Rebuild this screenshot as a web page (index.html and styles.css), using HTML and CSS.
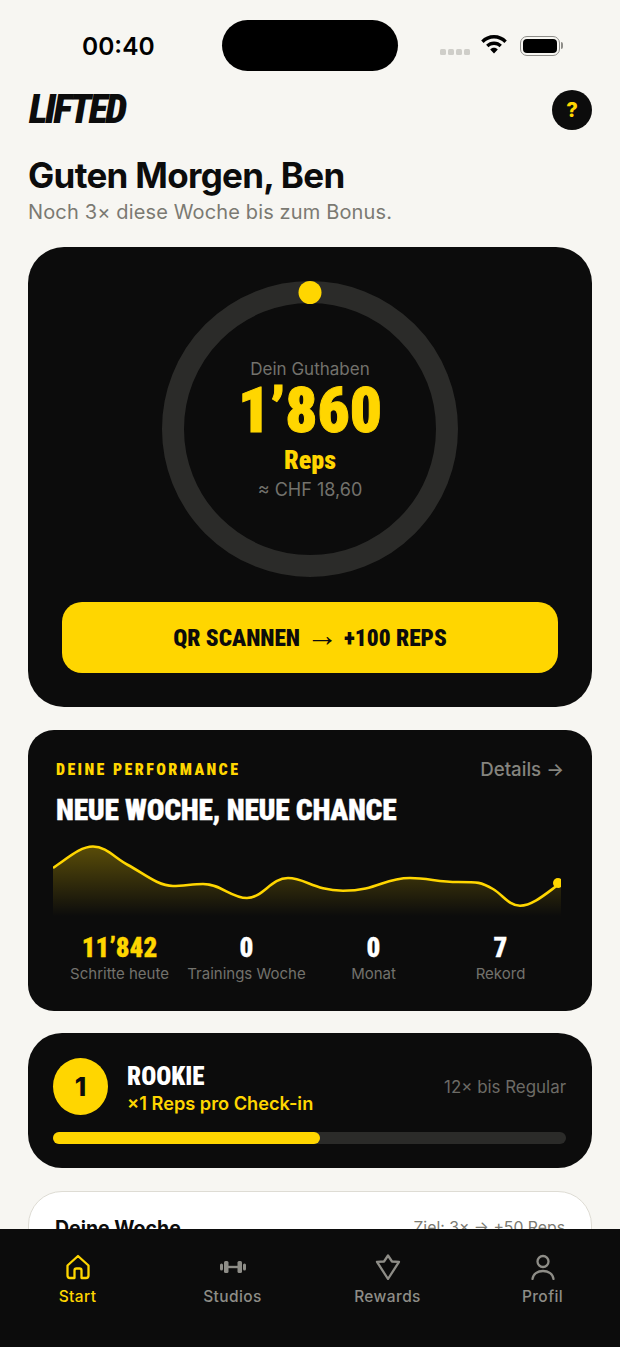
FILE: index.html
```html
<!DOCTYPE html>
<html lang="de">
<head>
<meta charset="utf-8">
<title>LIFTED</title>
<link rel="stylesheet" href="styles.css">
</head>
<body>
<div class="phone">
  <main class="content">
    <div class="status">
      <span class="time">00:40</span>
      <span class="island"></span>
      <div class="status-icons">
        <span class="signal"><i></i><i></i><i></i><i></i></span>
        <svg class="wifi" width="28" height="20" viewBox="0 0 28 20"><path d="M14 1C9 1 4.600 3 1.200 6.400L3.600 9C6.400 6.300 10 4.600 14 4.600S21.600 6.300 24.400 9L26.800 6.400C23.400 3 19 1 14 1ZM14 7.500C11 7.500 8.200 8.700 6.100 10.800L8.500 13.300C10 11.900 11.900 11 14 11S18 11.900 19.500 13.300L21.900 10.800C19.800 8.700 17 7.500 14 7.500ZM14 13.800C12.500 13.800 11.200 14.400 10.200 15.400L14 19.400L17.800 15.400C16.800 14.400 15.500 13.800 14 13.800Z" fill="#000"/></svg>
        <span class="battery"><span class="battery-fill"></span></span>
        <span class="battery-cap"></span>
      </div>
    </div>
    <header class="top">
      <span class="logo">LIFTED</span>
      <span class="help">?</span>
    </header>
    <h1 class="title">Guten Morgen, Ben</h1>
    <p class="sub">Noch 3× diese Woche bis zum Bonus.</p>

    <section class="hero">
      <div class="ring">
        <svg class="ring-svg" width="296" height="296" viewBox="0 0 296 296">
          <circle cx="148" cy="148" r="137" fill="none" stroke="#2b2b29" stroke-width="22"/>
          <circle cx="148" cy="11.500" r="11.500" fill="#ffd600"/>
        </svg>
        <div class="ring-text">
          <span class="ring-label">Dein Guthaben</span>
          <span class="ring-value">1’860</span>
          <span class="ring-unit">Reps</span>
          <span class="ring-chf">≈ CHF 18,60</span>
        </div>
      </div>
      <button class="scan"><span>QR SCANNEN</span><span class="scan-arrow">→</span><span>+100 REPS</span></button>
    </section>

    <section class="perf">
      <div class="perf-head">
        <span class="perf-label">DEINE PERFORMANCE</span>
        <span class="perf-link">Details →</span>
      </div>
      <h2 class="perf-title">NEUE WOCHE, NEUE CHANCE</h2>
      <svg class="chart" width="508" height="76" viewBox="0 0 508 76">
        <defs>
          <linearGradient id="fade" x1="0" y1="0" x2="0" y2="1">
            <stop offset="0" stop-color="#ffd600" stop-opacity=".32"/>
            <stop offset="1" stop-color="#ffd600" stop-opacity="0"/>
          </linearGradient>
        </defs>
        <path d="M0 28C15 18 27 6.500 40 6.500C53 6.500 62 18 75 25C90 33 105 46 120 46C130 46 140 44 150 44C168 44 178 58 194 58C210 58 218 38 235 38C252 38 262 50.700 290 50.700C325 50.700 330 38 357 38C375 38 385 42 405 42C425 42 428 42 440 49C450 55 456 65.700 467 65.700C480 65.700 495 52 505 45L508 43V76H0Z" fill="url(#fade)"/>
        <path d="M0 28C15 18 27 6.500 40 6.500C53 6.500 62 18 75 25C90 33 105 46 120 46C130 46 140 44 150 44C168 44 178 58 194 58C210 58 218 38 235 38C252 38 262 50.700 290 50.700C325 50.700 330 38 357 38C375 38 385 42 405 42C425 42 428 42 440 49C450 55 456 65.700 467 65.700C480 65.700 495 52 505 45" fill="none" stroke="#ffd600" stroke-width="2.600"/>
        <circle cx="505" cy="43" r="5" fill="#ffd600"/>
      </svg>
      <div class="stats">
        <div class="stat"><b class="stat-num stat-yellow">11’842</b><span class="stat-label">Schritte heute</span></div>
        <div class="stat"><b class="stat-num">0</b><span class="stat-label">Trainings Woche</span></div>
        <div class="stat"><b class="stat-num">0</b><span class="stat-label">Monat</span></div>
        <div class="stat"><b class="stat-num">7</b><span class="stat-label">Rekord</span></div>
      </div>
    </section>

    <section class="level">
      <div class="level-row">
        <span class="badge">1</span>
        <div class="level-text">
          <span class="level-name">ROOKIE</span>
          <span class="level-multi">×1 Reps pro Check-in</span>
        </div>
        <span class="level-next">12× bis Regular</span>
      </div>
      <div class="bar"><span class="bar-fill"></span></div>
    </section>

    <section class="week">
      <span class="week-title">Deine Woche</span>
      <span class="week-goal">Ziel: 3× → +50 Reps</span>
    </section>
  </main>

  <nav class="nav">
    <a class="nav-item nav-active">
      <svg width="26" height="26" viewBox="0 0 26 26" fill="none" stroke="currentColor" stroke-width="2.300" stroke-linejoin="round"><path d="M13 2L2.500 11.500V21.500Q2.500 24 5 24H9.500V16.500Q9.500 14.500 11.500 14.500H14.500Q16.500 14.500 16.500 16.500V24H21Q23.500 24 23.500 21.500V11.500Z"/></svg>
      <span>Start</span>
    </a>
    <a class="nav-item">
      <svg width="26" height="26" viewBox="0 0 26 26" fill="currentColor"><rect x="0" y="9.500" width="3" height="7" rx="1.500"/><rect x="4" y="7" width="4.500" height="12" rx="1.500"/><rect x="8" y="11.800" width="10" height="2.400"/><rect x="17.500" y="7" width="4.500" height="12" rx="1.500"/><rect x="23" y="9.500" width="3" height="7" rx="1.500"/></svg>
      <span>Studios</span>
    </a>
    <a class="nav-item">
      <svg width="26" height="26" viewBox="0 0 26 26" fill="none" stroke="currentColor" stroke-width="2.300" stroke-linejoin="round"><path d="M13 1.500L17 7.500L24 7.800L13 25L2 7.800L9 7.500Z"/></svg>
      <span>Rewards</span>
    </a>
    <a class="nav-item">
      <svg width="26" height="26" viewBox="0 0 26 26" fill="none" stroke="currentColor" stroke-width="2.300" stroke-linecap="round"><circle cx="13" cy="7.500" r="5.500"/><path d="M2.500 25C3 20 7.500 17 13 17S23 20 23.500 25"/></svg>
      <span>Profil</span>
    </a>
  </nav>
</div>
</body>
</html>
```

FILE: styles.css
```css
* { box-sizing: border-box; margin: 0; padding: 0; }
html, body { height: 100%; }
body {
  background: #f7f6f2;
  font-family: "Inter", "Liberation Sans", sans-serif;
  color: #0c0c0c;
}
.phone {
  width: 620px;
  height: 1347px;
  display: flex;
  flex-direction: column;
  overflow: hidden;
}
.content {
  flex: 1;
  min-height: 0;
  overflow: hidden;
  padding: 20px 28px 0;
  display: flex;
  flex-direction: column;
}
.content > * { flex: none; }

/* status bar */
.status {
  height: 51px;
  display: flex;
  align-items: center;
}
.time {
  width: 194px;
  padding-left: 54px;
  padding-top: 1px;
  font-size: 24.500px;
  font-weight: 600;
  line-height: 51px;
  color: #000;
}
.island {
  width: 176px;
  height: 51px;
  border-radius: 26px;
  background: #000;
}
.status-icons {
  display: flex;
  align-items: center;
  margin-left: 42px;
}
.signal {
  display: flex;
  gap: 2px;
  margin-top: 13px;
  margin-right: 10px;
}
.signal i {
  width: 6px;
  height: 6px;
  border-radius: 1.500px;
  background: #cfcec9;
}
.wifi { margin-top: -3px; margin-right: 12px; }
.battery {
  width: 40px;
  height: 20px;
  border: 1.500px solid #8e8d89;
  border-radius: 7px;
  padding: 2px;
  display: flex;
}
.battery-fill {
  flex: 1;
  background: #000;
  border-radius: 4px;
}
.battery-cap {
  width: 2px;
  height: 7px;
  margin-left: 1px;
  border-radius: 0 2px 2px 0;
  background: #8e8d89;
}

/* header */
.top {
  margin-top: 19px;
  height: 40px;
  display: flex;
  align-items: center;
  justify-content: space-between;
}
.logo {
  font-family: "Roboto", sans-serif;
  font-stretch: 75%;
  font-weight: 900;
  font-style: italic;
  font-size: 40px;
  line-height: 40px;
  letter-spacing: -2.500px;
  margin-left: 1px;
}
.help {
  width: 40px;
  height: 40px;
  border-radius: 50%;
  background: #0c0c0c;
  color: #ffd600;
  font-size: 20px;
  font-weight: 800;
  display: flex;
  align-items: center;
  justify-content: center;
}
.title {
  margin: 23px 0 0;
  font-size: 35px;
  line-height: 44px;
  font-weight: 700;
  letter-spacing: -0.700px;
}
.sub {
  margin: 2px 0 0;
  font-size: 20px;
  line-height: 26px;
  letter-spacing: .14px;
  color: #7b7a72;
}

/* shared condensed face */
.ring-value, .ring-unit, .scan, .perf-label, .perf-title, .stat-num, .level-name {
  font-family: "Roboto", sans-serif;
  font-stretch: 75%;
  font-weight: 900;
}

/* hero */
.hero {
  margin-top: 22px;
  height: 460px;
  border-radius: 36px;
  background: #0c0c0c;
  padding: 34px 34px 0;
  display: flex;
  flex-direction: column;
  align-items: center;
}
.ring {
  width: 296px;
  height: 296px;
  display: grid;
}
.ring-svg, .ring-text { grid-area: 1 / 1; }
.ring-text {
  display: flex;
  flex-direction: column;
  align-items: center;
  padding-top: 77px;
}
.ring-label {
  font-size: 17px;
  line-height: 22px;
  color: #73726c;
}
.ring-value {
  font-size: 63px;
  line-height: 60px;
  margin-top: 1px;
  color: #ffd600;
  -webkit-text-stroke: 1px #ffd600;
}
.ring-unit {
  font-size: 26px;
  line-height: 30px;
  margin-top: 4px;
  color: #ffd600;
}
.ring-chf {
  font-size: 18px;
  line-height: 24px;
  margin-top: 3px;
  color: #73726c;
}
.scan {
  width: 100%;
  height: 71px;
  margin-top: 25px;
  border: 0;
  border-radius: 20px;
  background: #ffd600;
  color: #0c0c0c;
  font-size: 23.300px;
  display: flex;
  align-items: center;
  justify-content: center;
  gap: 6px;
}
.scan-arrow {
  font-family: "Liberation Sans", sans-serif;
  font-weight: 400;
  font-size: 32px;
  line-height: 32px;
  margin-top: -5px;
}

/* performance */
.perf {
  margin-top: 23px;
  height: 281px;
  border-radius: 26px;
  background: #0c0c0c;
  padding: 28px 28px 0;
}
.perf-head {
  display: flex;
  align-items: center;
  justify-content: space-between;
  height: 22px;
}
.perf-label {
  font-size: 16px;
  letter-spacing: 2.400px;
  color: #ffd600;
}
.perf-link {
  font-size: 18.700px;
  font-weight: 500;
  color: #85847e;
}
.perf-title {
  margin-top: 12px;
  font-size: 29.500px;
  line-height: 36px;
  letter-spacing: -.3px;
  color: #fff;
  -webkit-text-stroke: .3px #fff;
}
.chart {
  display: block;
  margin: 12px 0 0 -3px;
}
.stats {
  margin-top: 17px;
  display: grid;
  grid-template-columns: repeat(4, 127px);
}
.stat {
  display: flex;
  flex-direction: column;
  align-items: center;
}
.stat-num {
  font-size: 27px;
  line-height: 30px;
  color: #fff;
  -webkit-text-stroke: .3px currentColor;
}
.stat-yellow { color: #ffd600; }
.stat-label {
  margin-top: 1px;
  font-size: 15px;
  line-height: 20px;
  color: #73726c;
  white-space: nowrap;
}

/* level */
.level {
  margin-top: 22px;
  height: 135px;
  border-radius: 34px;
  background: #0c0c0c;
  padding: 25px 26px 0 25px;
}
.level-row {
  display: flex;
  align-items: center;
  height: 57px;
}
.badge {
  width: 55px;
  height: 57px;
  border-radius: 50%;
  background: #ffd600;
  color: #0c0c0c;
  font-size: 26px;
  font-weight: 800;
  display: flex;
  align-items: center;
  justify-content: center;
  flex: none;
}
.level-text {
  margin-left: 19px;
  padding-top: 3px;
  display: flex;
  flex-direction: column;
  flex: 1;
}
.level-name {
  font-size: 25px;
  line-height: 28px;
  color: #fff;
}
.level-multi {
  margin-top: 1px;
  font-size: 18.200px;
  line-height: 22px;
  font-weight: 600;
  color: #ffd600;
}
.level-next {
  font-size: 16.900px;
  color: #6c6b66;
}
.bar {
  margin-top: 17px;
  height: 12px;
  border-radius: 6px;
  background: #2b2b29;
}
.bar-fill {
  display: block;
  width: 52%;
  height: 100%;
  border-radius: 6px;
  background: #ffd600;
}

/* week */
.week {
  margin-top: 23px;
  height: 120px;
  border: 1.500px solid #dedcd4;
  border-radius: 34px;
  background: #fff;
  padding: 23px 26px 0;
  display: flex;
  justify-content: space-between;
  align-items: flex-start;
}
.week-title {
  font-size: 19.500px;
  line-height: 26px;
  font-weight: 700;
}
.week-goal {
  font-size: 15.800px;
  line-height: 26px;
  color: #7b7a72;
}

/* nav */
.nav {
  height: 118px;
  flex: none;
  background: #0c0c0c;
  display: grid;
  grid-template-columns: repeat(4, 155px);
  padding-top: 25px;
}
.nav-item {
  display: flex;
  flex-direction: column;
  align-items: center;
  height: 62px;
  color: #8e8d87;
  font-size: 15.500px;
  font-weight: 500;
  line-height: 20px;
  letter-spacing: .4px;
}
.nav-item svg { margin-bottom: 7px; }
.nav-active { color: #ffd600; }
```
